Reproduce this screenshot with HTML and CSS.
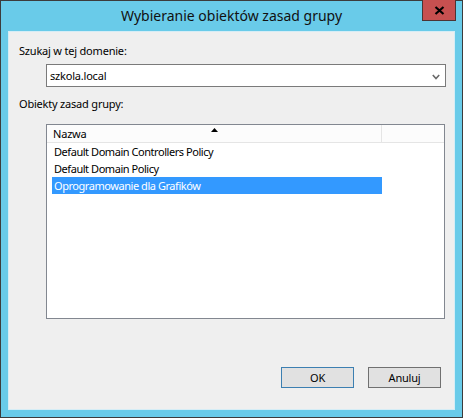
FILE: index.html
```html
<!DOCTYPE html>
<html lang="pl">
<head>
<meta charset="utf-8">
<title>Wybieranie obiektów zasad grupy</title>
<link rel="stylesheet" href="styles.css">
</head>
<body>
<div class="window">
  <div class="titlebar">
    <div class="spacer"></div>
    <div class="title">Wybieranie obiektów zasad grupy</div>
    <div class="controls">
      <div class="close">
        <svg width="11" height="9" viewBox="0 0 11 9"><path d="M1.5 1 L9.5 8 M9.5 1 L1.5 8" stroke="#000" stroke-width="2.2" fill="none"/></svg>
      </div>
    </div>
  </div>
  <div class="client">
    <div class="label">Szukaj w tej domenie:</div>
    <div class="combo">
      <span class="combo-text">szkola.local</span>
      <svg class="chev" width="8" height="6" viewBox="0 0 8 6"><path d="M0.8 1 L4 4.5 L7.2 1" stroke="#6a6a6a" stroke-width="1.6" fill="none"/></svg>
    </div>
    <div class="label label2">Obiekty zasad grupy:</div>
    <div class="listbox">
      <div class="header">
        <div class="hcell">Nazwa<svg class="sort" width="7" height="4" viewBox="0 0 7 4"><path d="M0 4 L3.5 0 L7 4 Z" fill="#000"/></svg></div>
        <div class="hrest"></div>
      </div>
      <div class="rows">
        <div class="row">Default Domain Controllers Policy</div>
        <div class="row">Default Domain Policy</div>
        <div class="row selected">Oprogramowanie dla Grafików</div>
      </div>
    </div>
    <div class="buttons">
      <div class="btn default">OK</div>
      <div class="btn">Anuluj</div>
    </div>
  </div>
</div>
</body>
</html>
```
FILE: styles.css
```css
html, body {
  margin: 0;
  padding: 0;
  background: #69cbe9;
}
body {
  font-family: "Noto Sans", "Segoe UI", sans-serif;
  font-size: 11px;
  letter-spacing: -0.2px;
  color: #000;
}
.window {
  box-sizing: border-box;
  width: 463px;
  height: 418px;
  border: 1px solid #3c3c3c;
  background: #69cbe9;
  display: flex;
  flex-direction: column;
  padding: 0 7px 7px 7px;
}
.titlebar {
  height: 30px;
  display: grid;
  grid-template-columns: 1fr auto 1fr;
  align-items: start;
  margin: 0 -6px 0 -7px;
}
.title {
  font-size: 14px;
  letter-spacing: 0;
  line-height: 20px;
  margin-top: 5px;
  color: #111;
  padding-left: 1px;
}
.controls {
  display: flex;
  justify-content: flex-end;
  padding-right: 5px;
}
.close {
  box-sizing: border-box;
  width: 34px;
  height: 21px;
  margin-top: -1px;
  background: #c75050;
  border: 1px solid #4d3434;
  border-top: none;
  display: flex;
  align-items: center;
  justify-content: center;
}
.client {
  flex: 1;
  box-sizing: border-box;
  background: #efefef;
  border: 1px solid #d5edf6;
  display: flex;
  flex-direction: column;
  padding: 11px 0 0 10px;
}
.label {
  line-height: 16px;
  height: 16px;
}
.label2 {
  margin-top: 9px;
}
.combo {
  box-sizing: border-box;
  margin: 5px 0 0 27px;
  width: 400px;
  height: 23px;
  background: #fff;
  border: 1px solid #7a7a7a;
  display: flex;
  align-items: center;
  justify-content: space-between;
  padding: 0 5px 0 3px;
}
.combo-text {
  line-height: 16px;
}
.chev {
  margin-top: 2px;
}
.listbox {
  box-sizing: border-box;
  margin: 12px 0 0 27px;
  width: 399px;
  height: 195px;
  background: #fff;
  border: 1px solid #828790;
  display: flex;
  flex-direction: column;
}
.header {
  display: flex;
  height: 18px;
  box-sizing: border-box;
  border-bottom: 1px solid #e5e5e5;
  background: #fcfcfc;
}
.hcell {
  position: relative;
  box-sizing: border-box;
  width: 335px;
  border-right: 1px solid #e5e5e5;
  padding-left: 6px;
  line-height: 17px;
}
.sort {
  position: absolute;
  left: 164px;
  top: 3px;
}
.hrest {
  flex: 1;
}
.rows {
  display: flex;
  flex-direction: column;
  padding-left: 5px;
}
.row {
  width: 330px;
  height: 17px;
  line-height: 17px;
  padding-left: 2px;
  box-sizing: border-box;
  letter-spacing: -0.45px;
}
.row.selected {
  background: #3399ff;
  color: #fff;
}
.buttons {
  display: flex;
  justify-content: flex-end;
  gap: 14px;
  margin-top: 48px;
  padding-right: 13px;
}
.btn {
  box-sizing: border-box;
  width: 73px;
  height: 21px;
  background: #e1e1e1;
  border: 1px solid #adadad;
  display: flex;
  align-items: center;
  justify-content: center;
  line-height: 16px;
}
.btn.default {
  border-color: #3c7fb1;
}
.btn:not(.default) {
  border-color: #707070;
}
```
